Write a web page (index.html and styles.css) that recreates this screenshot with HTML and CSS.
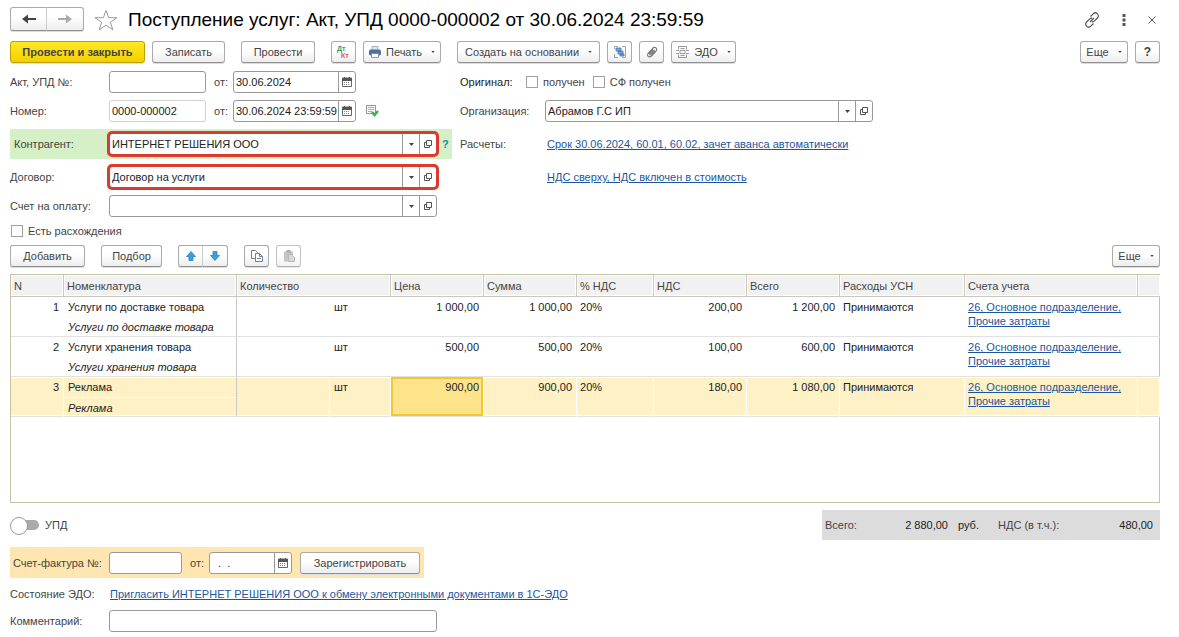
FILE: index.html
```html
<!DOCTYPE html>
<html lang="ru">
<head>
<meta charset="utf-8">
<title>Поступление услуг</title>
<link rel="stylesheet" href="styles.css">
</head>
<body>
<svg class="sprite" aria-hidden="true">
  <symbol id="calendar" viewBox="0 0 10 10"><path d="M.5 1h9v8.500h-9z" fill="#fff" stroke="#666"/><path d="M0 1h10v3H0z" fill="#555"/><path d="M2.500 0v2M7.500 0v2" stroke="#555"/><path d="M2 5.500h6M2 7.500h6" stroke="#888" stroke-dasharray="1 1"/></symbol>
  <symbol id="open" viewBox="0 0 10 10"><path d="M3.500 1.500h5v5h-5zM3 3.500H1.500v5h5V7" fill="none" stroke="#555"/></symbol>
  <symbol id="down" viewBox="0 0 5 3"><path d="M0 0h5L2.500 3z" fill="#444"/></symbol>
</svg>
<main class="page">
  <header class="head">
    <div class="pair nav">
      <button class="btn" aria-label="Назад"><svg width="14" height="10" viewBox="0 0 14 10"><path d="M14 5H4" stroke="#444" stroke-width="2"/><path d="M0 5l6-4.500v9z" fill="#444"/></svg></button>
      <button class="btn" aria-label="Вперед"><svg width="14" height="10" viewBox="0 0 14 10"><path d="M0 5h10" stroke="#aaa" stroke-width="2"/><path d="M14 5L8 .5v9z" fill="#aaa"/></svg></button>
    </div>
    <button class="plain star" aria-label="В избранное"><svg width="24" height="22" viewBox="0 0 24 22"><path d="M12 1.500l2.700 7.200H23l-6.600 4.600 2.400 7.400L12 16.200l-6.800 4.500 2.400-7.400L1 8.700h8.300z" fill="#fff" stroke="#999"/></svg></button>
    <h1>Поступление услуг: Акт, УПД 0000-000002 от 30.06.2024 23:59:59</h1>
    <div class="tools">
      <button class="plain" aria-label="Ссылка"><svg width="16" height="16" viewBox="0 0 16 16" fill="none" stroke="#555" stroke-width="1.200"><path d="M6.500 4.500l2.700-2.700c1.300-1.300 3-1.200 4.200 0s1.300 2.900 0 4.200l-2.900 2.900c-.8.800-1.700 1-2.600.8M9.500 11.500l-2.700 2.700c-1.300 1.300-3 1.200-4.200 0s-1.300-2.900 0-4.200l2.900-2.900c.8-.8 1.700-1 2.600-.8M6 10l4-4"/></svg></button>
      <button class="plain" aria-label="Меню"><svg width="4" height="12" viewBox="0 0 4 12" fill="#555"><path d="M.5 0h3v3h-3zM.5 4.500h3v3h-3zM.5 9h3v3h-3z"/></svg></button>
      <button class="plain" aria-label="Закрыть"><svg width="8" height="8" viewBox="0 0 8 8"><path d="M.5.5l7 7M7.500.5l-7 7" stroke="#555"/></svg></button>
    </div>
  </header>

  <div class="bar">
    <div class="group">
      <button class="btn primary">Провести и закрыть</button>
      <button class="btn w73">Записать</button>
    </div>
    <button class="btn w74">Провести</button>
    <div class="group">
      <button class="btn icon" aria-label="Дт Кт"><svg width="14" height="14" viewBox="0 0 14 14"><text class="dt" x="0" y="6">Дт</text><text class="kt" x="4" y="13">Кт</text></svg></button>
      <button class="btn w78"><svg width="12" height="12" viewBox="0 0 12 12"><path d="M3 .5h6v4H3z" fill="#dbe6f2" stroke="#8ba3bf" stroke-width=".8"/><rect y="3.500" width="12" height="6" rx="1.800" fill="#4f7099"/><path d="M2.500 7.500h7v4h-7z" fill="#fff" stroke="#6b87a8" stroke-width=".8"/></svg>Печать<svg class="caret"><use href="#down"/></svg></button>
    </div>
    <div class="group">
      <button class="btn w143">Создать на основании<svg class="caret"><use href="#down"/></svg></button>
      <button class="btn icon" aria-label="Структура"><svg width="12" height="12" viewBox="0 0 12 12"><path d="M.5 3V.5H4M8 .5h3.500V11.500H8M4 11.500H.5V8" fill="none" stroke="#8aa9c6"/><path d="M2 2h5v3H2zM4 5h5v3H4zM6 8h4v2H6z" fill="#7fabd3" stroke="#3c77a8" stroke-width=".8"/></svg></button>
      <button class="btn icon" aria-label="Вложения"><svg width="12" height="12" viewBox="0 0 12 12" fill="none" stroke="#777" stroke-width="1.100"><path d="M1.300 8.300L6.500 2.500c2.500-2.600 5.700.2 3.500 2.700L5.500 10C3 12.300.2 9.500 2.500 7l4.500-4.600M3.500 9.200l5-5.300M3 8l4-4.300M5 9.500L9 5"/></svg></button>
      <button class="btn w65"><svg width="13" height="12" viewBox="0 0 13 12" fill="none" stroke="#999"><path d="M2.500 3.500v-3h8v3M2.500 8.500v3h8v-3M0 4.500h3M10 4.500h3M0 7.500h3M10 7.500h3M4 4.500h5v3H4zM4.500 2.500h4M4.500 9.500h4"/></svg>ЭДО<svg class="caret"><use href="#down"/></svg></button>
    </div>
    <div class="group end">
      <button class="btn more">Еще<svg class="caret"><use href="#down"/></svg></button>
      <button class="btn icon bold">?</button>
    </div>
  </div>

  <section class="form">
    <div class="row">
      <label class="lab" for="act">Акт, УПД №:</label><input class="box num" id="act">
      <label class="from" for="d1">от:</label><span class="combo date"><input id="d1" value="30.06.2024"><button aria-label="Календарь"><svg width="10" height="10"><use href="#calendar"/></svg></button></span>
    </div>
    <div class="row checks">
      <span class="orig">Оригинал:</span><label><input type="checkbox">получен</label><label><input type="checkbox">СФ получен</label>
    </div>

    <div class="row">
      <label class="lab" for="no">Номер:</label><input class="box num soft" id="no" value="0000-000002">
      <label class="from" for="d2">от:</label><span class="combo date"><input id="d2" value="30.06.2024 23:59:59"><button aria-label="Календарь"><svg width="10" height="10"><use href="#calendar"/></svg></button></span>
      <svg class="posted" width="13" height="12" viewBox="0 0 13 12"><path d="M.5.5h9v8h-9z" fill="#f4f6f7" stroke="#8d979c"/><path d="M2 2.500h6M2 4.500h6M2 6.500h4" stroke="#a5b3ba"/><path d="M6 7l2.500 3L12 6" fill="none" stroke="#35b44a" stroke-width="2.500"/></svg>
    </div>
    <div class="row">
      <label class="lab2" for="org">Организация:</label><span class="combo"><input id="org" value="Абрамов Г.С ИП"><button aria-label="Выбрать"><svg class="caret"><use href="#down"/></svg></button><button aria-label="Открыть"><svg width="10" height="10"><use href="#open"/></svg></button></span>
    </div>

    <div class="row green">
      <label class="lab" for="agent">Контрагент:</label><span class="combo marked"><input id="agent" value="ИНТЕРНЕТ РЕШЕНИЯ ООО"><button aria-label="Выбрать"><svg class="caret"><use href="#down"/></svg></button><button aria-label="Открыть"><svg width="10" height="10"><use href="#open"/></svg></button></span><a class="hint" href="#">?</a>
    </div>
    <div class="row"><span class="lab2">Расчеты:</span><a class="inset" href="#">Срок 30.06.2024, 60.01, 60.02, зачет аванса автоматически</a></div>

    <div class="row">
      <label class="lab" for="deal">Договор:</label><span class="combo marked"><input id="deal" value="Договор на услуги"><button aria-label="Выбрать"><svg class="caret"><use href="#down"/></svg></button><button aria-label="Открыть"><svg width="10" height="10"><use href="#open"/></svg></button></span>
    </div>
    <div class="row"><span class="lab2"></span><a class="inset" href="#">НДС сверху, НДС включен в стоимость</a></div>

    <div class="row">
      <label class="lab" for="bill">Счет на оплату:</label><span class="combo"><input id="bill"><button aria-label="Выбрать"><svg class="caret"><use href="#down"/></svg></button><button aria-label="Открыть"><svg width="10" height="10"><use href="#open"/></svg></button></span>
    </div>
  </section>

  <label class="diff"><input type="checkbox">Есть расхождения</label>

  <div class="bar low">
    <button class="btn w75">Добавить</button>
    <button class="btn w61">Подбор</button>
    <div class="pair">
      <button class="btn icon" aria-label="Вверх"><svg width="10" height="10" viewBox="0 0 10 10"><path d="M5 .5l4.500 5H7v4H3v-4H.5z" fill="#38a0dc" stroke="#1d7fb8" stroke-width=".7"/></svg></button>
      <button class="btn icon" aria-label="Вниз"><svg width="10" height="10" viewBox="0 0 10 10"><path d="M5 9.500l4.500-5H7v-4H3v4H.5z" fill="#38a0dc" stroke="#1d7fb8" stroke-width=".7"/></svg></button>
    </div>
    <div class="group">
      <button class="btn icon" aria-label="Копировать"><svg width="12" height="12" viewBox="0 0 12 12" fill="#fff" stroke="#6f7f8c"><path d="M.5.5h4l2 2v6h-6z"/><path d="M4.500 3.500h4l3 3v5h-7z"/><path d="M8.500 3.500v3h3M6 8.500h4" fill="none"/></svg></button>
      <button class="btn icon" aria-label="Вставить" disabled><svg width="12" height="12" viewBox="0 0 12 12"><path d="M1 1.500h9v10H1z" fill="#aaa"/><path d="M3.500 0h4v2.500h-4z" fill="#888"/><path d="M5.500 4.500h3l3 3v4h-6z" fill="#c8c8c8" stroke="#999"/></svg></button>
    </div>
    <button class="btn more end">Еще<svg class="caret"><use href="#down"/></svg></button>
  </div>

  <div class="sheet">
    <table>
      <colgroup><col class="c53"><col class="c173"><col class="c93"><col class="c61"><col class="c93"><col class="c93"><col class="c77"><col class="c93"><col class="c93"><col class="c125"><col class="c173"><col class="c22"></colgroup>
      <thead><tr><th>N</th><th>Номенклатура</th><th colspan="2">Количество</th><th>Цена</th><th>Сумма</th><th>% НДС</th><th>НДС</th><th>Всего</th><th>Расходы УСН</th><th>Счета учета</th><th></th></tr></thead>
      <tbody>
        <tr><td class="n">1</td><td class="name"><div>Услуги по доставке товара</div><div><i>Услуги по доставке товара</i></div></td><td></td><td class="unit">шт</td><td class="n">1 000,00</td><td class="n">1 000,00</td><td>20%</td><td class="n">200,00</td><td class="n">1 200,00</td><td>Принимаются</td><td><a href="#">26, Основное подразделение,<br>Прочие затраты</a></td><td></td></tr>
        <tr><td class="n">2</td><td class="name"><div>Услуги хранения товара</div><div><i>Услуги хранения товара</i></div></td><td></td><td class="unit">шт</td><td class="n">500,00</td><td class="n">500,00</td><td>20%</td><td class="n">100,00</td><td class="n">600,00</td><td>Принимаются</td><td><a href="#">26, Основное подразделение,<br>Прочие затраты</a></td><td></td></tr>
        <tr class="sel"><td class="n">3</td><td class="name"><div>Реклама</div><div><i>Реклама</i></div></td><td></td><td class="unit">шт</td><td class="n cur">900,00</td><td class="n">900,00</td><td>20%</td><td class="n">180,00</td><td class="n">1 080,00</td><td>Принимаются</td><td><a href="#">26, Основное подразделение,<br>Прочие затраты</a></td><td></td></tr>
      </tbody>
    </table>
  </div>

  <div class="sum">
    <label class="switch"><input type="checkbox" role="switch">УПД</label>
    <div class="totals"><span>Всего:</span><b class="t1">2 880,00</b><span class="rub">руб.</span><span>НДС (в т.ч.):</span><b class="t2">480,00</b></div>
  </div>

  <div class="invoice">
    <label class="lab" for="sf">Счет-фактура №:</label><input class="box short" id="sf">
    <label class="from" for="d3">от:</label><span class="combo day"><input id="d3" value="  .  ."><button aria-label="Календарь"><svg width="10" height="10"><use href="#calendar"/></svg></button></span>
    <button class="btn reg">Зарегистрировать</button>
  </div>

  <div class="row edo"><span class="lab">Состояние ЭДО:</span><a class="near" href="#">Пригласить ИНТЕРНЕТ РЕШЕНИЯ ООО к обмену электронными документами в 1С-ЭДО</a></div>
  <div class="row"><label class="lab" for="note">Комментарий:</label><input class="box note" id="note"></div>
</main>
</body>
</html>
```
FILE: styles.css
```css
* { box-sizing: border-box; }
body { margin: 0; background: #fff; color: #444; font: 11px/14px "Liberation Sans", Arial, sans-serif; }
button, input { font: inherit; color: inherit; margin: 0; }
button { cursor: pointer; }
a { color: #1c56a0; }
.sprite { display: none; }
.page { display: flex; flex-direction: column; gap: 7px; padding: 7px 19px 5px 10px; }

.head { display: flex; align-items: center; height: 27px; padding-bottom: 2px; }
.head h1 { margin: 0; padding-left: 10px; color: #000; font-size: 19px; line-height: 24px; font-weight: 400; white-space: nowrap; }
.plain { display: flex; align-items: center; justify-content: center; padding: 0; border: 0; background: none; }
.star { margin-left: 10px; }
.tools { display: flex; align-items: center; gap: 22px; margin-left: auto; padding-right: 4px; }

.btn { display: flex; align-items: center; justify-content: center; gap: 5px; height: 22px; padding: 0; border: 1px solid #aaa; border-bottom-color: #8f8f8f; border-radius: 3px; background: linear-gradient(#fff 40%, #ededed); box-shadow: 0 1px 0 #ddd; white-space: nowrap; }
.btn:disabled { opacity: 0.7; }
.caret { width: 5px; height: 3px; }
.btn .caret { width: 4px; height: 2px; margin-left: 4px; }
.primary { width: 135px; border-color: #bda000; background: linear-gradient(#ffe921, #f2d000); font-weight: 700; }
.w61 { width: 61px; }
.w65 { width: 65px; }
.w73 { width: 73px; }
.w74 { width: 74px; }
.w75 { width: 75px; }
.w78 { width: 78px; }
.w143 { width: 143px; }
.icon { width: 25px; }
.more { width: 48px; }
.bold { font-size: 12px; font-weight: 700; }
.dt, .kt { font-size: 7px; font-weight: 700; fill: #2f9e58; }
.kt { fill: #e25555; }
.pair { display: flex; }
.pair .btn:first-child { border-radius: 3px 0 0 3px; }
.pair .btn:last-child { margin-left: -1px; border-left-color: #ccc; border-radius: 0 3px 3px 0; }
.pair .icon:last-child { width: 26px; }
.nav { align-self: flex-start; }
.nav .btn { width: 37px; height: 24px; }
.nav .btn:last-child { width: 38px; }
.bar { display: flex; gap: 16px; height: 23px; }
.low { height: 22px; }
.group { display: flex; gap: 7px; }
.end { margin-left: auto; }

.form { display: grid; grid-template-columns: 450px 1fr; row-gap: 7px; }
.row { display: flex; align-items: center; min-height: 22px; }
.lab { flex: none; width: 99px; }
.lab2 { flex: none; width: 85px; }
.from { width: 27px; padding-left: 8px; }
.box { height: 22px; padding: 0 2px; border: 1px solid #999; border-radius: 3px; background: #fff; color: #222; }
.soft { border-color: #d0d0d0; }
.num { width: 97px; }
.combo { display: flex; width: 328px; height: 22px; border: 1px solid #999; border-radius: 3px; background: #fff; }
.combo input { flex: 1; min-width: 0; padding: 0 0 0 2px; border: 0; background: none; color: #222; outline: 0; }
.combo button { display: flex; align-items: center; justify-content: center; width: 17px; padding: 0; border: 0; border-left: 1px solid #999; background: none; }
.date { width: 123px; }
.day { width: 83px; }
.posted { margin-left: 10px; }
.green { width: 442px; height: 30px; padding-left: 4px; background: #d5efc6; }
.green .lab { width: 95px; }
.marked { outline: 3px solid #dc3a2e; outline-offset: -1px; }
.hint { padding-left: 5px; color: #0c8fa8; font-weight: 700; text-decoration: none; }
.inset { padding-left: 2px; }
.near { padding-left: 1px; }
input[type="checkbox"] { appearance: none; flex: none; width: 12px; height: 12px; border: 1px solid #a0a0a0; background: #fff; }
.checks label, .diff { display: flex; align-items: center; gap: 5px; }
.checks { gap: 8px; }
.orig { width: 58px; color: #222; }
.diff { height: 14px; padding-left: 1px; align-self: flex-start; }

.sheet { min-height: 229px; border: 1px solid #c3c3a5; }
table { width: 100%; table-layout: fixed; border-collapse: separate; border-spacing: 0; }
.c22 { width: 22px; }
.c53 { width: 53px; }
.c61 { width: 61px; }
.c77 { width: 77px; }
.c93 { width: 93px; }
.c125 { width: 125px; }
.c173 { width: 173px; }
th { height: 22px; padding: 0 3px; border: solid #c9c9bf; border-width: 0 1px 1px 0; background: #f1f1f1; box-shadow: inset 0 0 0 1px #fff; font-weight: 400; text-align: left; }
th:last-child { border-right: 0; }
td { height: 40px; padding: 3px 3px 0; border-bottom: 1px solid #e2e2e2; color: #222; vertical-align: top; white-space: nowrap; }
td.n { padding-right: 5px; text-align: right; }
.sel td.n { padding-right: 4px; }
td.unit { padding-left: 4px; }
td.name { padding: 0; border-right: 1px solid #c9c9c9; }
.name div { height: 20px; padding: 3px 0 0 4px; }
.name div + div { height: 19px; }
.sel td { border-right: 1px solid #fff; background: #fdf1c5; box-shadow: inset 0 1px 0 #fff, inset 0 -1px 0 #fff; }
.sel td.name { border-right-color: #c9c9c9; }
.sel .name div + div { border-top: 1px solid #fff; }
.sel td.cur { background: #fde48a; box-shadow: inset 0 0 0 2px #efc832; }

.sum { display: flex; align-items: center; justify-content: space-between; height: 30px; }
.switch { display: flex; align-items: center; gap: 6px; }
.switch input { position: relative; width: 28px; height: 10px; margin-left: 1px; border: 0; border-radius: 5px; background: #aaa; }
.switch input::before { content: ""; position: absolute; top: -3px; left: -1px; width: 16px; height: 16px; border: 1px solid #999; border-radius: 50%; background: #fff; }
.totals { display: flex; align-items: center; width: 338px; height: 30px; padding: 0 7px 0 3px; background: #dcdcdc; }
.totals b { color: #222; font-weight: 400; text-align: right; }
.totals span:first-child { width: 35px; }
.t1 { width: 88px; }
.t2 { flex: 1; }
.rub { width: 40px; margin-left: 10px; color: #222; }
.invoice { display: flex; align-items: center; align-self: flex-start; width: 414px; height: 31px; padding-left: 3px; background: #ffe6b0; }
.invoice .lab { width: 96px; white-space: nowrap; }
.short { width: 73px; }
.invoice .day input { white-space: pre; }
.reg { width: 120px; margin-left: 8px; }
.edo { min-height: 18px; }
.note { width: 328px; }
```
